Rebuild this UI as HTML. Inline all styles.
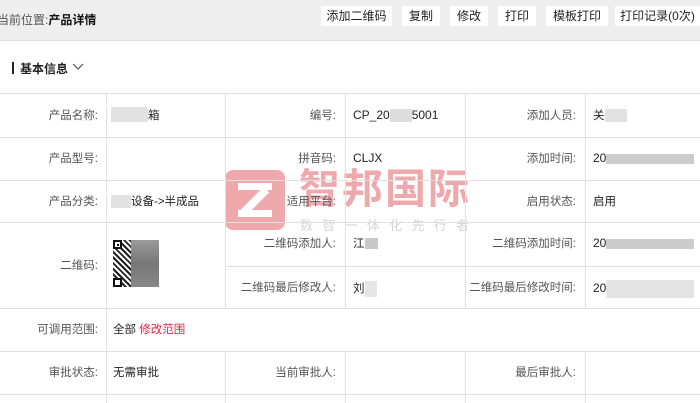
<!DOCTYPE html>
<html><head><meta charset="utf-8"><style>
*{margin:0;padding:0;box-sizing:border-box}
body{width:700px;height:403px;overflow:hidden;background:#fff;font-family:"Liberation Sans","Noto Sans CJK SC",sans-serif;font-size:12px;color:#222;position:relative}
.a{position:absolute}
.top{left:0;top:0;width:700px;height:41px;background:#eeeeee;border-bottom:1px solid #dcdcdc}
.btn{position:absolute;top:6px;height:20px;background:#fff;line-height:20px;text-align:center;font-size:12px;color:#222}
.hl{position:absolute;height:1px;background:#e0e0e0}
.vl{position:absolute;width:1px;background:#e0e0e0}
.lb{position:absolute;text-align:right;color:#555;font-size:11.5px;line-height:14px}
.v{position:absolute;font-size:11.5px;line-height:14px;color:#222}
</style></head><body>
<div class="a top"></div>
<div class="a" style="left:-3px;top:11px;font-size:12px;color:#555">当前位置:<b style="color:#111">产品详情</b></div>
<div class="btn" style="left:321px;width:71px">添加二维码</div>
<div class="btn" style="left:402px;width:38px">复制</div>
<div class="btn" style="left:450px;width:38px">修改</div>
<div class="btn" style="left:498px;width:38px">打印</div>
<div class="btn" style="left:546px;width:62px">模板打印</div>
<div class="btn" style="left:615px;width:85px">打印记录(0次)</div>
<div class="a" style="left:12px;top:62px;width:2px;height:12px;background:#222"></div>
<div class="a" style="left:20px;top:60px;font-weight:bold;font-size:12px">基本信息</div>
<svg class="a" style="left:72px;top:63px" width="12" height="8"><path d="M1 1 L6 6 L11 1" stroke="#555" fill="none" stroke-width="1.2"/></svg>

<!-- watermark -->
<div class="a" style="left:225px;top:170px;width:60px;height:60px;background:#eea9ad;border-radius:8px"></div>
<div class="a" style="left:238px;top:183px;width:34px;height:34px;">
 <div class="a" style="left:0;top:0;width:34px;height:7px;background:#fff"></div>
 <div class="a" style="left:0;top:27px;width:34px;height:7px;background:#fff"></div>
 <div class="a" style="left:13px;top:2px;width:8px;height:32px;background:#fff;transform:rotate(45deg)"></div>
</div>
<div class="a" style="left:299px;top:164px;font-size:41px;font-weight:bold;color:#eea9ad;letter-spacing:2px;line-height:50px">智邦国际</div>
<div class="a" style="left:300px;top:218px;font-size:13px;color:#d4d4d4;letter-spacing:9.3px;line-height:15px">数智一体化先行者</div>

<div class="hl" style="left:0;top:93px;width:700px"></div>
<div class="hl" style="left:0;top:137px;width:700px"></div>
<div class="hl" style="left:0;top:180px;width:700px"></div>
<div class="hl" style="left:0;top:222px;width:700px"></div>
<div class="hl" style="left:225px;top:266px;width:475px"></div>
<div class="hl" style="left:0;top:308px;width:700px"></div>
<div class="hl" style="left:0;top:351px;width:700px"></div>
<div class="hl" style="left:0;top:394px;width:700px"></div>
<div class="vl" style="left:106px;top:93px;height:310px"></div>
<div class="vl" style="left:225px;top:93px;height:215px"></div>
<div class="vl" style="left:345px;top:93px;height:215px"></div>
<div class="vl" style="left:465px;top:93px;height:215px"></div>
<div class="vl" style="left:585px;top:93px;height:215px"></div>
<div class="vl" style="left:225px;top:351px;height:52px"></div>
<div class="vl" style="left:345px;top:351px;height:52px"></div>
<div class="vl" style="left:465px;top:351px;height:52px"></div>
<div class="vl" style="left:585px;top:351px;height:52px"></div>

<!-- row1 -->
<div class="lb" style="left:0;width:98px;top:109px">产品名称:</div>
<div class="a" style="left:111px;top:107px;width:37px;height:15px;background:#e2e2e2"></div>
<div class="v" style="left:148px;top:109px">箱</div>
<div class="lb" style="left:225px;width:111px;top:109px">编号:</div>
<div class="v" style="left:353px;top:108px;font-size:12px">CP_20<span style="display:inline-block;width:22px;height:13px;background:#ddd;vertical-align:middle"></span>5001</div>
<div class="lb" style="left:465px;width:111px;top:109px">添加人员:</div>
<div class="v" style="left:593px;top:109px">关<span style="display:inline-block;width:22px;height:13px;background:#e2e2e2;vertical-align:middle"></span></div>
<!-- row2 -->
<div class="lb" style="left:0;width:98px;top:152px">产品型号:</div>
<div class="lb" style="left:225px;width:111px;top:152px">拼音码:</div>
<div class="v" style="left:353px;top:151px;font-size:12px">CLJX</div>
<div class="lb" style="left:465px;width:111px;top:152px">添加时间:</div>
<div class="v" style="left:593px;top:151px;font-size:12px">20<span style="display:inline-block;width:88px;height:10px;background:#ccc;vertical-align:middle"></span></div>
<!-- row3 -->
<div class="lb" style="left:0;width:98px;top:195px">产品分类:</div>
<div class="v" style="left:111px;top:195px"><span style="display:inline-block;width:20px;height:13px;background:#e2e2e2;vertical-align:middle"></span>设备->半成品</div>
<div class="lb" style="left:225px;width:111px;top:195px">适用平台:</div>
<div class="lb" style="left:465px;width:111px;top:195px">启用状态:</div>
<div class="v" style="left:593px;top:195px">启用</div>
<!-- row4/5 -->
<div class="lb" style="left:0;width:98px;top:259px">二维码:</div>
<div class="a" style="left:113px;top:240px;width:18px;height:47px;background:repeating-linear-gradient(45deg,#222 0 2px,#fff 2px 4px)"></div>
<div class="a" style="left:113px;top:240px;width:9px;height:9px;border:2px solid #111;background:#fff"><div style="margin:1.5px;width:2px;height:2px;background:#111"></div></div>
<div class="a" style="left:113px;top:278px;width:9px;height:9px;border:2px solid #111;background:#fff"></div>
<div class="a" style="left:131px;top:240px;width:28px;height:47px;background:linear-gradient(#9a9a9a,#777 50%,#888)"></div>
<div class="lb" style="left:225px;width:111px;top:237px">二维码添加人:</div>
<div class="v" style="left:353px;top:237px">江<span style="display:inline-block;width:13px;height:11px;background:#c8c8c8;vertical-align:middle"></span></div>
<div class="lb" style="left:465px;width:111px;top:237px">二维码添加时间:</div>
<div class="v" style="left:593px;top:236px;font-size:12px">20<span style="display:inline-block;width:88px;height:10px;background:#ccc;vertical-align:middle"></span></div>
<div class="lb" style="left:225px;width:111px;top:281px">二维码最后修改人:</div>
<div class="v" style="left:353px;top:281px">刘<span style="display:inline-block;width:12px;height:16px;background:#e6e6e6;vertical-align:middle"></span></div>
<div class="lb" style="left:465px;width:111px;top:281px">二维码最后修改时间:</div>
<div class="v" style="left:593px;top:280px;font-size:12px">20<span style="display:inline-block;width:88px;height:18px;background:#e4e4e4;vertical-align:middle"></span></div>
<!-- row6 -->
<div class="lb" style="left:0;width:98px;top:323px">可调用范围:</div>
<div class="v" style="left:113px;top:323px">全部 <span style="color:#e8203a">修改范围</span></div>
<!-- row7 -->
<div class="lb" style="left:0;width:98px;top:366px">审批状态:</div>
<div class="v" style="left:113px;top:366px">无需审批</div>
<div class="lb" style="left:225px;width:111px;top:366px">当前审批人:</div>
<div class="lb" style="left:465px;width:111px;top:366px">最后审批人:</div>
</body></html>
